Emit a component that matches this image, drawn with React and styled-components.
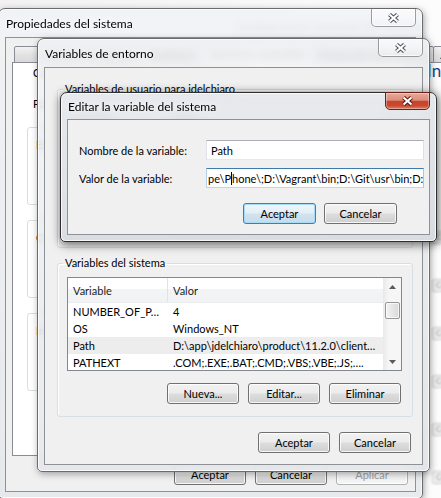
import React from 'react';
import styled, { createGlobalStyle } from 'styled-components';

const GlobalStyle = createGlobalStyle`
  html, body {
    margin: 0;
    padding: 0;
    overflow: hidden;
  }
  body {
    font-family: Lato, "Noto Sans", sans-serif;
    font-size: 11px;
    color: #000;
  }
`;

const Desktop = styled.div`
  position: relative;
  width: 441px;
  height: 498px;
  overflow: hidden;
  background: #f7f7f7;
`;

// the control panel window that sits behind everything
const Backdrop = styled.div`
  position: absolute;
  inset: 0;
  display: flex;
  flex-direction: column;
  background: linear-gradient(90deg, #f2f2f2, #fcfcfc);
`;

const BackCaption = styled.div`
  margin: 19px 0 0 236px;
  font-size: 12px;
  color: #6f6f6f;
  white-space: nowrap;
`;

const BackHeading = styled.div`
  margin: 26px 0 0 427px;
  font-size: 17px;
  color: #1e3f8a;
  white-space: nowrap;
`;

const BackList = styled.div`
  margin: 150px 0 0 432px;
  display: flex;
  flex-direction: column;
  gap: 11px;
`;

const BackItem = styled.div`
  width: 40px;
  height: 13px;
  box-sizing: border-box;
  padding-left: 3px;
  font-size: 8px;
  line-height: 11px;
  color: #9a9a9a;
  white-space: nowrap;
  border: 1px solid ${p => (p.$boxed ? '#c8c8c8' : 'transparent')};
  border-radius: 2px;
  background: ${p => (p.$boxed ? '#f0f0f0' : 'transparent')};
  filter: blur(0.8px);
`;

const Frame = styled.div`
  position: absolute;
  left: ${p => p.$x}px;
  top: ${p => p.$y}px;
  width: ${p => p.$w}px;
  height: ${p => p.$h}px;
  box-sizing: border-box;
  display: flex;
  flex-direction: column;
  padding: 0 6px 6px;
  border: 1px solid ${p => (p.$active ? '#2e2e2e' : '#6c6c6c')};
  border-radius: 7px 7px 5px 5px;
  background: ${p =>
    p.$active
      ? 'linear-gradient(180deg, rgba(230,233,237,0.9), rgba(216,220,225,0.92))'
      : 'linear-gradient(180deg, rgba(240,242,245,0.84), rgba(228,231,235,0.86))'};
  backdrop-filter: blur(4px);
  box-shadow: inset 0 0 0 1px rgba(255, 255, 255, 0.75),
    ${p => (p.$active ? '1px 2px 10px 1px rgba(0,0,0,0.55)' : '1px 2px 7px rgba(0,0,0,0.35)')};
`;

const TitleBar = styled.div`
  position: relative;
  height: ${p => p.$h}px;
  flex: none;
  display: flex;
  align-items: center;
  padding-left: 1px;
  white-space: nowrap;
`;

const Title = styled.span`
  font-size: 12px;
  color: #000;
  text-shadow: 0 0 6px rgba(255, 255, 255, 0.9);
`;

const CloseBtn = styled.div`
  position: absolute;
  top: -1px;
  right: 0;
  width: 45px;
  height: ${p => p.$h}px;
  box-sizing: border-box;
  display: flex;
  align-items: center;
  justify-content: center;
  border: 1px solid ${p => (p.$active ? '#6b2216' : 'rgba(80,80,80,0.55)')};
  border-radius: 0 0 5px 5px;
  background: ${p =>
    p.$active
      ? 'linear-gradient(180deg, #e9a899 0%, #dc8e7b 45%, #c8442b 52%, #c64a31 78%, #de7c62 100%)'
      : 'linear-gradient(180deg, rgba(255,255,255,0.55), rgba(255,255,255,0.15))'};
  box-shadow: inset 0 0 0 1px rgba(255, 255, 255, ${p => (p.$active ? 0.35 : 0.7)});
`;

const Client = styled.div`
  flex: 1;
  min-height: 0;
  display: flex;
  flex-direction: column;
  padding: ${p => p.$pad};
  background: #f0f0f0;
  border: 1px solid #8e9297;
`;

const Btn = styled.button`
  box-sizing: border-box;
  width: ${p => p.$w || 72}px;
  height: 21px;
  padding: 0;
  font: inherit;
  font-size: 11px;
  color: ${p => (p.disabled ? '#a0a0a0' : '#000')};
  border: 1px solid ${p => (p.$default ? '#3c7fb1' : p.disabled ? '#adb2b5' : '#707070')};
  border-radius: 3px;
  background: ${p =>
    p.disabled
      ? '#f4f4f4'
      : p.$default
      ? 'linear-gradient(180deg, #eef6fb 0%, #e3eef6 48%, #d2e3ee 52%, #c6dbe9 100%)'
      : 'linear-gradient(180deg, #f2f2f2 0%, #ebebeb 48%, #dddddd 52%, #cfcfcf 100%)'};
  box-shadow: inset 0 0 0 1px ${p => (p.$default ? '#a8dcf6' : 'rgba(255,255,255,0.8)')};
`;

const ButtonRow = styled.div`
  display: flex;
  justify-content: flex-end;
  gap: ${p => p.$gap ?? 9}px;
  margin-top: ${p => p.$mt || 0}px;
  padding-right: ${p => p.$pr || 0}px;
  flex: none;
`;

const GroupBox = styled.fieldset`
  margin: ${p => p.$mt || 0}px 0 ${p => p.$mb || 0}px;
  padding: ${p => p.$pad || '7px 10px 12px 9px'};
  height: ${p => (p.$h ? `${p.$h}px` : 'auto')};
  box-sizing: border-box;
  min-width: 0;
  flex: none;
  border: 1px solid #d5dfe5;
  border-radius: 3px;
  box-shadow: inset 1px 1px 0 #fff;
`;

const Legend = styled.legend`
  padding: 0 2px;
  margin-left: ${p => p.$ml ?? -4}px;
  font-size: 11px;
  line-height: 14px;
  color: ${p => p.$color || '#000'};
`;

const List = styled.div`
  height: ${p => p.$h}px;
  box-sizing: border-box;
  display: flex;
  background: #fff;
  border: 1px solid #828790;
  overflow: hidden;
`;

const ListMain = styled.div`
  flex: 1;
  min-width: 0;
  display: flex;
  flex-direction: column;
`;

const HeaderRow = styled.div`
  display: grid;
  grid-template-columns: 100px 1fr;
  height: 25px;
  flex: none;
  background: linear-gradient(180deg, #ffffff 0%, #ffffff 45%, #f3f4f6 46%, #f1f2f4 100%);
  border-bottom: 1px solid #eaecef;
  box-sizing: border-box;
`;

const HeadCell = styled.div`
  display: flex;
  align-items: center;
  padding-left: 5px;
  border-right: 1px solid ${p => (p.$sep ? '#e0e3e6' : 'transparent')};
  color: #1e1e1e;
`;

const Row = styled.div`
  display: grid;
  grid-template-columns: 100px 1fr;
  height: 17px;
  flex: none;
  align-items: center;
  background: ${p => (p.$sel ? '#ededed' : 'transparent')};
`;

const Cell = styled.div`
  padding-left: 5px;
  white-space: nowrap;
  overflow: hidden;
`;

const ScrollBar = styled.div`
  width: 17px;
  flex: none;
  display: flex;
  flex-direction: column;
  background: linear-gradient(90deg, #ebebeb, #f6f6f6 30%, #f6f6f6);
  border-left: 1px solid #eaeaea;
`;

const ScrollArrow = styled.div`
  height: 17px;
  flex: none;
  display: flex;
  align-items: center;
  justify-content: center;
`;

const Thumb = styled.div`
  height: 17px;
  margin: 7px 0 0 1px;
  width: 15px;
  box-sizing: border-box;
  border: 1px solid #979797;
  border-radius: 2px;
  background: linear-gradient(90deg, #f3f3f3, #e6e6e6 50%, #d9d9d9);
  box-shadow: inset 0 0 0 1px rgba(255, 255, 255, 0.7);
`;

const ScrollFill = styled.div`
  flex: 1;
`;

const FieldRow = styled.div`
  display: flex;
  align-items: center;
  margin-top: ${p => p.$mt || 0}px;
  flex: none;
`;

const FieldLabel = styled.div`
  width: 127px;
  flex: none;
  white-space: nowrap;
`;

const TextBox = styled.div`
  box-sizing: border-box;
  width: 218px;
  height: 20px;
  display: flex;
  align-items: center;
  padding: 0 ${p => (p.$focus ? 1 : 4)}px;
  background: #fff;
  border: 1px solid;
  border-color: ${p => (p.$focus ? '#3d7bad #a4c9e3 #b7d9ed #b5cfe7' : '#abadb3 #dbdfe6 #e3e9ef #e2e3ea')};
  white-space: nowrap;
  overflow: hidden;
`;

const Caret = styled.span`
  display: inline-block;
  flex: none;
  width: 1px;
  height: 13px;
  background: #000;
`;

const TabRow = styled.div`
  display: flex;
  align-items: flex-end;
  height: 18px;
  padding-left: 2px;
  margin-bottom: -1px;
  position: relative;
  z-index: 1;
  flex: none;
`;

const Tab = styled.div`
  height: ${p => (p.$active ? 19 : 17)}px;
  box-sizing: border-box;
  padding: 0 6px 0 ${p => p.$padL ?? 6}px;
  display: flex;
  align-items: center;
  white-space: nowrap;
  border: 1px solid #898c95;
  border-bottom-color: ${p => (p.$active ? '#fff' : '#898c95')};
  margin-left: ${p => (p.$first ? 0 : -1)}px;
  border-radius: 2px 2px 0 0;
  background: ${p => (p.$active ? '#fff' : 'linear-gradient(180deg, #f2f2f2, #e3e3e3 50%, #d9d9d9)')};
`;

const Panel = styled.div`
  flex: 1;
  min-height: 0;
  display: flex;
  flex-direction: column;
  padding: 3px 14px 0;
  background: #fff;
  border: 1px solid #898c95;
`;

const PanelText = styled.div`
  line-height: 14px;
  margin-top: ${p => p.$mt || 0}px;
  padding-left: 6px;
  white-space: nowrap;
  flex: none;
`;

const SmallText = styled.div`
  line-height: 14px;
  white-space: nowrap;
`;

function CloseGlyph({ active }) {
  const d = 'M2.5 1.5 L10.5 8.5 M10.5 1.5 L2.5 8.5';
  return (
    <svg width="13" height="10" viewBox="0 0 13 10">
      <path d={d} stroke={active ? '#5d1a10' : '#4f5358'} strokeWidth="4.2" />
      <path d={d} stroke="#fff" strokeWidth="2.2" />
    </svg>
  );
}

function Arrow({ up }) {
  return (
    <svg width="7" height="4" viewBox="0 0 7 4">
      <path d={up ? 'M0 4 L3.5 0 L7 4 Z' : 'M0 0 L3.5 4 L7 0 Z'} fill="#5a5a5a" />
    </svg>
  );
}

function Window({ x, y, w, h, title, titleH = 28, active, pad, children }) {
  return (
    <Frame $x={x} $y={y} $w={w} $h={h} $active={active}>
      <TitleBar $h={titleH}>
        <Title>{title}</Title>
        <CloseBtn $active={active} $h={active ? 18 : 19}>
          <CloseGlyph active={active} />
        </CloseBtn>
      </TitleBar>
      <Client $pad={pad}>{children}</Client>
    </Frame>
  );
}

function ListView({ height, rows }) {
  return (
    <List $h={height}>
      <ListMain>
        <HeaderRow>
          <HeadCell $sep>Variable</HeadCell>
          <HeadCell>Valor</HeadCell>
        </HeaderRow>
        {rows.map(r => (
          <Row key={r[0]} $sel={r[2]}>
            <Cell>{r[0]}</Cell>
            <Cell>{r[1]}</Cell>
          </Row>
        ))}
      </ListMain>
      <ScrollBar>
        <ScrollArrow>
          <Arrow up />
        </ScrollArrow>
        <Thumb />
        <ScrollFill />
        <ScrollArrow>
          <Arrow />
        </ScrollArrow>
      </ScrollBar>
    </List>
  );
}

const userRows = [
  ['Path', 'C:\\Users\\jdelchiaro\\AppData\\Roaming\\npm'],
  ['TEMP', '%USERPROFILE%\\AppData\\Local\\Temp'],
  ['TMP', '%USERPROFILE%\\AppData\\Local\\Temp'],
];

const systemRows = [
  ['NUMBER_OF_P…', '4'],
  ['OS', 'Windows_NT'],
  ['Path', 'D:\\app\\jdelchiaro\\product\\11.2.0\\client…', true],
  ['PATHEXT', '.COM;.EXE;.BAT;.CMD;.VBS;.VBE;.JS;….'],
];

const backItems = ['Con', '', 'Con', '', 'Con', '', 'Con', '', 'Con', '', 'Con'];

const groups = [
  ['Rendimiento', 'Efectos visuales, programación del procesador y memoria'],
  ['Perfiles de usuario', 'Configuración del escritorio relativa al inicio de sesión'],
  ['Inicio y recuperación', 'Información de inicio del sistema y de depuración'],
];

export default function App() {
  return (
    <>
      <GlobalStyle />
      <Desktop>
        <Backdrop>
          <BackCaption>Configuración avanzada del sistema</BackCaption>
          <BackHeading>Información</BackHeading>
          <BackList>
            {backItems.map((t, i) => (
              <BackItem key={i} $boxed={i % 2 === 0}>
                {t}
              </BackItem>
            ))}
          </BackList>
        </Backdrop>

        <Window x={-2} y={8} w={425} h={491} title="Propiedades del sistema" pad="7px 6px 6px">
          <TabRow>
            <Tab $first $padL={30}>Nombre de equipo</Tab>
            <Tab>Hardware</Tab>
            <Tab $active>Opciones avanzadas</Tab>
            <Tab>Protección del sistema</Tab>
            <Tab>Acceso remoto</Tab>
          </TabRow>
          <Panel>
            <PanelText>Cambie la configuración avanzada del sistema.</PanelText>
            <PanelText $mt={17}>Para realizar la mayoría de estos cambios, inicie sesión como administrador.</PanelText>
            {groups.map((g, i) => (
              <GroupBox key={g[0]} $h={85} $mb={8} $mt={i === 0 ? 9 : 0} $pad="4px 8px 8px 8px">
                <Legend $ml={5} $color="#1e3287">{g[0]}</Legend>
                <SmallText>{g[1]}</SmallText>
                <ButtonRow $mt={30}>
                  <Btn $w={90}>Configuración...</Btn>
                </ButtonRow>
              </GroupBox>
            ))}
          </Panel>
          <ButtonRow $mt={8} $pr={1}>
            <Btn>Aceptar</Btn>
            <Btn>Cancelar</Btn>
            <Btn disabled>Aplicar</Btn>
          </ButtonRow>
        </Window>

        <Window x={37} y={38} w={393} h={434} title="Variables de entorno" pad="14px 9px 11px 12px">
          <GroupBox $mb={8}>
            <Legend>Variables de usuario para jdelchiaro</Legend>
            <ListView height={99} rows={userRows} />
            <ButtonRow $mt={12} $pr={1}>
              <Btn>Nueva...</Btn>
              <Btn>Editar...</Btn>
              <Btn>Eliminar</Btn>
            </ButtonRow>
          </GroupBox>
          <GroupBox>
            <Legend>Variables del sistema</Legend>
            <ListView height={94} rows={systemRows} />
            <ButtonRow $mt={12} $pr={1}>
              <Btn>Nueva...</Btn>
              <Btn>Editar...</Btn>
              <Btn>Eliminar</Btn>
            </ButtonRow>
          </GroupBox>
          <ButtonRow $mt={15} $pr={2}>
            <Btn>Aceptar</Btn>
            <Btn>Cancelar</Btn>
          </ButtonRow>
        </Window>

        <Window
          x={60}
          y={92}
          w={377}
          h={150}
          titleH={26}
          active
          title="Editar la variable del sistema"
          pad="20px 5px 10px 11px"
        >
          <FieldRow>
            <FieldLabel>Nombre de la variable:</FieldLabel>
            <TextBox>Path</TextBox>
          </FieldRow>
          <FieldRow $mt={8}>
            <FieldLabel>Valor de la variable:</FieldLabel>
            <TextBox $focus>
              pe\P<Caret />hone\;D:\Vagrant\bin;D:\Git\usr\bin;D:
            </TextBox>
          </FieldRow>
          <ButtonRow $mt={15} $pr={27} $gap={8}>
            <Btn $w={73} $default>
              Aceptar
            </Btn>
            <Btn $w={73}>Cancelar</Btn>
          </ButtonRow>
        </Window>
      </Desktop>
    </>
  );
}
